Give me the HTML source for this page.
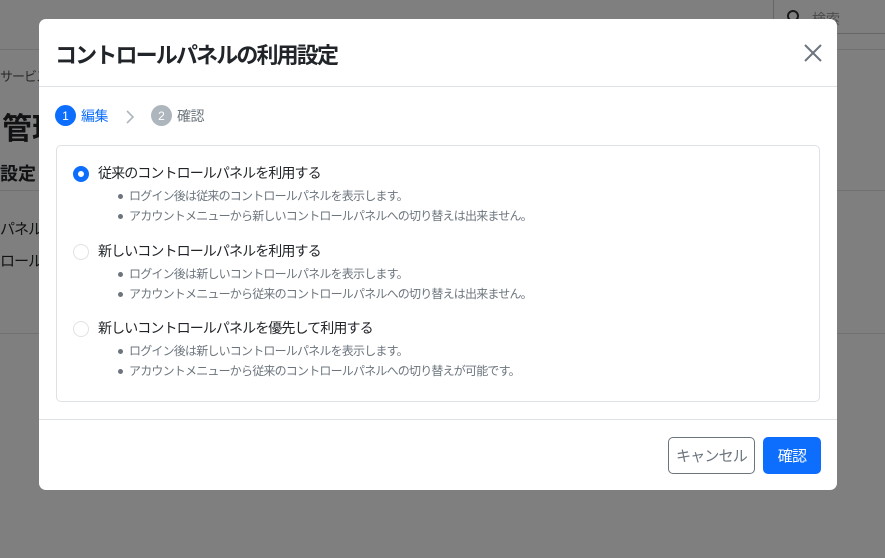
<!DOCTYPE html>
<html><head><meta charset="utf-8"><style>
*{box-sizing:border-box;margin:0;padding:0}
body{width:885px;height:558px;overflow:hidden;position:relative;background:#fff;font-family:"Liberation Sans","Noto Sans CJK JP",sans-serif;color:#212529}
.bg{position:absolute;font-family:"Liberation Sans","Noto Sans CJK JP",sans-serif}
.ov{position:absolute;inset:0;background:rgba(0,0,0,.5)}
.modal{position:absolute;left:39px;top:19px;width:798px;height:471px;background:#fff;border-radius:7px}
.hd{height:68px;border-bottom:1px solid #dee2e6;position:relative}
.hd h1{position:absolute;left:16px;top:19px;font-size:22px;font-weight:bold;letter-spacing:-1.85px}
.x{position:absolute;left:765px;top:25px}
.step{position:absolute;top:86px;font-size:14px;display:flex;align-items:center;letter-spacing:-0.5px}
.c{width:21px;height:21px;border-radius:50%;color:#fff;font-size:12px;display:flex;align-items:center;justify-content:center;margin-right:5px;letter-spacing:0}
.box{position:absolute;left:17px;top:126px;width:764px;height:257px;border:1px solid #dee2e6;border-radius:5px}
.opt{position:absolute;left:16px;font-size:14px;letter-spacing:-0.9px}
.r{position:absolute;left:0;top:2px;width:16px;height:16px;border-radius:50%;border:1px solid #dee2e6}
.r.on{border:5px solid #0d6efd}
.opt .t{position:absolute;left:25px;top:-1px;white-space:nowrap}
.opt ul{position:absolute;left:56px;top:22px;list-style:none;font-size:12px;letter-spacing:-0.8px;color:#6c757d;white-space:nowrap}
.opt li{height:20px;line-height:20px;position:relative}
.opt li:before{content:"";position:absolute;left:-11px;top:8px;width:5px;height:5px;border-radius:50%;background:#6c757d}
.ft{position:absolute;left:0;right:0;top:400px;border-top:1px solid #dee2e6}
.btn{position:absolute;top:418px;height:37px;border-radius:5px;font-size:15px;letter-spacing:-0.8px;display:flex;align-items:center;justify-content:center}
</style></head><body>
<div style="position:absolute;left:0;right:0;top:49px;border-top:1px solid #dee2e6"></div>
<div style="position:absolute;left:773px;top:-4px;width:130px;height:38px;border:1px solid #ccc;border-radius:5px"></div>
<svg style="position:absolute;left:786px;top:9px" width="16" height="16" viewBox="0 0 16 16"><circle cx="7" cy="7" r="5" fill="none" stroke="#333" stroke-width="2"/></svg>
<div class="bg" style="left:812px;top:9px;font-size:14px;color:#999">検索</div>
<div class="bg" style="left:0;top:66px;font-size:13px;color:#555;letter-spacing:-1px">サービス</div>
<div class="bg" style="left:2px;top:104px;font-size:30px;font-weight:bold">管理</div>
<div class="bg" style="left:0;top:160px;font-size:18px;font-weight:bold">設定</div>
<div style="position:absolute;left:0;right:0;top:190px;border-top:1px solid #dee2e6"></div>
<div class="bg" style="left:0;top:218px;font-size:15px;letter-spacing:-1px">パネルの</div>
<div class="bg" style="left:0;top:250px;font-size:15px;letter-spacing:-1px">ロール</div>
<div style="position:absolute;left:0;right:0;top:333px;border-top:1px solid #dee2e6"></div>
<div class="ov"></div>
<div class="modal">
<div class="hd"><h1>コントロールパネルの利用設定</h1>
<svg class="x" width="18" height="18" viewBox="0 0 18 18"><path d="M1 1L17 17M17 1L1 17" stroke="#6c757d" stroke-width="2"/></svg></div>
<div class="step" style="left:16px;color:#0d6efd"><span class="c" style="background:#0d6efd">1</span>編集</div>
<svg style="position:absolute;left:86px;top:91px" width="10" height="14" viewBox="0 0 10 14"><path d="M2 1L8 7L2 13" fill="none" stroke="#adb5bd" stroke-width="1.6"/></svg>
<div class="step" style="left:112px;color:#6c757d"><span class="c" style="background:#adb5bd">2</span>確認</div>
<div class="box">
<div class="opt" style="top:18px"><span class="r on"></span><span class="t">従来のコントロールパネルを利用する</span><ul><li>ログイン後は従来のコントロールパネルを表示します。</li><li>アカウントメニューから新しいコントロールパネルへの切り替えは出来ません。</li></ul></div>
<div class="opt" style="top:96px"><span class="r"></span><span class="t">新しいコントロールパネルを利用する</span><ul><li>ログイン後は新しいコントロールパネルを表示します。</li><li>アカウントメニューから従来のコントロールパネルへの切り替えは出来ません。</li></ul></div>
<div class="opt" style="top:173px"><span class="r"></span><span class="t">新しいコントロールパネルを優先して利用する</span><ul><li>ログイン後は新しいコントロールパネルを表示します。</li><li>アカウントメニューから従来のコントロールパネルへの切り替えが可能です。</li></ul></div>
</div>
<div class="ft"></div>
<div class="btn" style="left:629px;width:87px;border:1px solid #6c757d;color:#6c757d">キャンセル</div>
<div class="btn" style="left:724px;width:58px;background:#0d6efd;color:#fff">確認</div>
</div>
</body></html>
